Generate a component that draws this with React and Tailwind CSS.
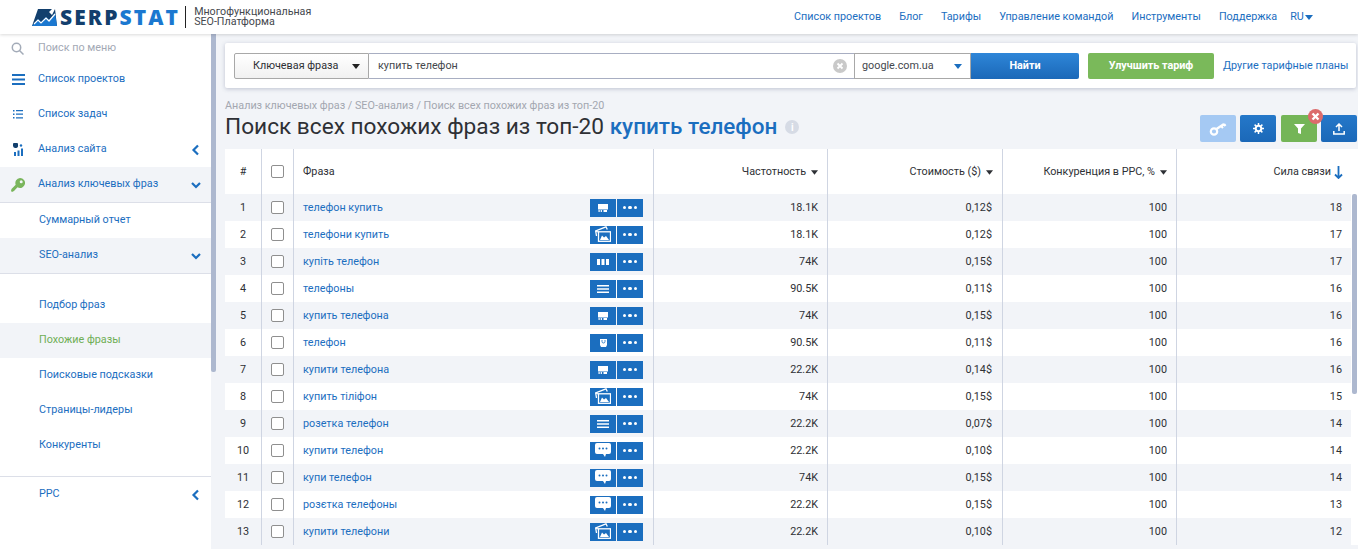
const font = { fontFamily: "Roboto, sans-serif" };

const rows = [
  [1, "телефон купить", "shop", "18.1K", "0,12$", 18],
  [2, "телефони купить", "images", "18.1K", "0,12$", 17],
  [3, "купіть телефон", "columns", "74K", "0,15$", 17],
  [4, "телефоны", "lines", "90.5K", "0,11$", 16],
  [5, "купить телефона", "shop", "74K", "0,15$", 16],
  [6, "телефон", "bag", "90.5K", "0,11$", 16],
  [7, "купити телефона", "shop", "22.2K", "0,14$", 16],
  [8, "купить тіліфон", "images", "74K", "0,15$", 15],
  [9, "розетка телефон", "lines", "22.2K", "0,07$", 14],
  [10, "купити телефон", "chat", "22.2K", "0,10$", 14],
  [11, "купи телефон", "chat", "74K", "0,15$", 14],
  [12, "розєтка телефоны", "chat", "22.2K", "0,15$", 13],
  [13, "купити телефони", "images", "22.2K", "0,10$", 12],
];

const topLinks = ["Список проектов", "Блог", "Тарифы", "Управление командой", "Инструменты", "Поддержка"];

function Caret({ className = "" }) {
  return (
    <svg width="8" height="5" viewBox="0 0 8 5" className={className}>
      <path d="M0 0h8L4 5z" fill="currentColor" />
    </svg>
  );
}

function Chevron({ dir }) {
  return (
    <svg width="12" height="12" viewBox="0 0 12 12" className="text-[#1b6ebf]">
      <path
        d={dir === "down" ? "M2 4l4 4 4-4" : "M8 1.500L3.500 6 8 10.500"}
        fill="none"
        stroke="currentColor"
        strokeWidth="2.200"
      />
    </svg>
  );
}

function RowIcon({ type }) {
  if (type === "shop")
    return (
      <svg width="10" height="8" viewBox="0 0 10 8" fill="white">
        <path d="M0 0h10v5.500H0z" />
        <path d="M.5 6h1.200v2H.5zM2.700 6h1.200v2H2.700zM5.500 6H9v2H5.500z" />
      </svg>
    );
  if (type === "images")
    return (
      <svg width="16" height="16" viewBox="0 0 16 16" fill="none" stroke="white" className="-mt-px">
        <path d="M1.500 10L.7 5 11 .8l1.300 2.700" strokeWidth="1.300" />
        <path d="M.7 5l3 1.200" strokeWidth="1.100" />
        <rect x="3.500" y="5.800" width="12" height="9.500" strokeWidth="1.300" />
        <path d="M5 14l2-4.500 2 2 2-1.500 3 4z" fill="white" stroke="none" />
      </svg>
    );
  if (type === "columns")
    return (
      <svg width="12" height="6" viewBox="0 0 12 6" fill="white">
        <path d="M0 0h3v6H0zM4.500 0h3v6h-3zM9 0h3v6H9z" />
      </svg>
    );
  if (type === "lines")
    return (
      <svg width="12" height="8" viewBox="0 0 12 8" fill="white">
        <path d="M0 0h12v1.500H0zM0 3.250h12v1.500H0zM0 6.500h12V8H0z" />
      </svg>
    );
  if (type === "bag")
    return (
      <svg width="7" height="8" viewBox="0 0 7 8" fill="white">
        <path d="M0 0h7v6L6 8H1L0 6z" />
        <path d="M2 1v1.500a1.500 1.500 0 003 0V1" fill="none" stroke="#1b6ebf" strokeWidth=".8" />
      </svg>
    );
  return (
    <svg width="16" height="14" viewBox="0 0 16 14" fill="white" className="-mt-px">
      <path d="M2 0h12a2 2 0 012 2v7a2 2 0 01-2 2h-3l-1 3-2-3H2a2 2 0 01-2-2V2a2 2 0 012-2z" />
      <circle cx="4.500" cy="5.500" r="1" fill="#1b6ebf" />
      <circle cx="8" cy="5.500" r="1" fill="#1b6ebf" />
      <circle cx="11.500" cy="5.500" r="1" fill="#1b6ebf" />
    </svg>
  );
}

function Check() {
  return <span className="h-[13px] w-[13px] rounded-[2px] border border-[#8f8f8f] bg-white" />;
}

function SideItem({ icon, label, chevron, active, sub }) {
  return (
    <div
      className={`flex h-[35px] items-center pr-[9px] text-[#1b6ebf] ${active ? "bg-[#f2f4f8]" : ""} ${sub ? "pl-[39px]" : ""}`}
    >
      {!sub && <span className="flex w-[38px] shrink-0 justify-center pr-[2px]">{icon}</span>}
      <span className="flex-1">{label}</span>
      {chevron && <Chevron dir={chevron} />}
    </div>
  );
}

function ActionButton({ color, children }) {
  return (
    <div className={`flex h-[27px] w-9 items-center justify-center rounded-[2px] ${color}`}>{children}</div>
  );
}

export default function App() {
  return (
    <div className="h-[549px] overflow-hidden bg-[#f2f4f8] text-[10.800px] text-[#2e3035]" style={font}>
      <header className="relative z-10 flex h-[34px] items-center bg-white shadow-[0_1px_3px_rgba(0,0,0,0.15)]">
        <div className="flex w-[794px] shrink-0 items-center pl-[32px]">
          <svg width="25" height="17" viewBox="0 0 25 17">
            <path d="M6 0h14l-3 3 3 3 3-6 2 17H0z" fill="#123f6d" />
            <path d="M0 17l6-7 3 3 5-5 3 3 6-7 2 13z" fill="#1b78d0" />
            <path d="M2 15l4-4 3 3 5-5 3 3 6-7" fill="none" stroke="white" strokeWidth="1.200" />
          </svg>
          <span
            className="ml-[3px] text-[21px] leading-none font-extrabold tracking-[2.100px] text-[#123f6d]"
            style={{ fontFamily: "'Open Sans', sans-serif" }}
          >
            SERP<span className="text-[#1b78d0]">STAT</span>
          </span>
          <span className="mr-[8px] ml-[5px] h-[22px] w-px bg-[#222]" />
          <span className="text-[10.700px] leading-[10px] text-[#44474d]">
            Многофункциональная
            <br />
            SEO-Платформа
          </span>
        </div>
        <nav className="flex items-center text-[#1b6ebf]">
          {topLinks.map((link) => (
            <span key={link} className="mr-[18px]">{link}</span>
          ))}
          <span className="-ml-[5px] flex items-center gap-[1px]">
            RU <Caret />
          </span>
        </nav>
      </header>

      <div className="flex h-[515px]">
        <aside className="relative flex w-[216px] shrink-0 bg-white">
          <div className="w-[211px] pt-px">
            <div className="flex h-[27px] items-center text-[#a3a9b5]">
              <span className="flex w-[35px] justify-center">
                <svg width="13" height="13" viewBox="0 0 13 13" fill="none" stroke="#a3abb8" strokeWidth="1.500">
                  <circle cx="5.500" cy="5.500" r="4.200" />
                  <path d="M8.500 8.500L12.500 12.500" />
                </svg>
              </span>
              <span className="ml-[3px]">Поиск по меню</span>
            </div>
            <SideItem
              label="Список проектов"
              icon={
                <svg width="13" height="11" viewBox="0 0 13 11" fill="#1b6ebf">
                  <path d="M0 0h13v2H0zM0 4.500h13v2H0zM0 9h13v2H0z" />
                </svg>
              }
            />
            <SideItem
              label="Список задач"
              icon={
                <svg width="10" height="9" viewBox="0 0 10 9" fill="#1b6ebf">
                  <path d="M0 0h1.500v1.500H0zM3 0h7v1.200H3zM0 3.500h1.500V5H0zM3 3.600h7v1.200H3zM0 7h1.500v1.500H0zM3 7.200h7v1.200H3z" />
                </svg>
              }
            />
            <SideItem
              label="Анализ сайта"
              chevron="left"
              icon={
                <svg width="11" height="13" viewBox="0 0 11 13" fill="#123f6d">
                  <path d="M1 0h3a1 1 0 011 1v1a2.500 2.500 0 01-5 1V1a1 1 0 011-1z" />
                  <circle cx="8" cy="2.500" r="1.200" fill="#1b6ebf" />
                  <path d="M1 9h2v4H1zM4.500 7.500h2V13h-2zM8 5.500h2V13H8z" fill="#1b6ebf" />
                </svg>
              }
            />
            <div className="border-b border-[#dcdfe8]">
              <SideItem
                active
                label="Анализ ключевых фраз"
                chevron="down"
                icon={
                  <svg width="14" height="14" viewBox="0 0 14 14" fill="#7ab55c">
                    <path d="M9 0a5 5 0 11-2.500 9.300L3 13l-2 1-1-1 .5-2 4.200-4.200A5 5 0 019 0zm1.200 2.300a1.500 1.500 0 100 3 1.500 1.500 0 000-3z" fillRule="evenodd" />
                  </svg>
                }
              />
            </div>
            <SideItem sub label="Суммарный отчет" />
            <div className="border-b border-[#dcdfe8]">
              <SideItem sub active label="SEO-анализ" chevron="down" />
            </div>
            <div className="mt-[14px]">
              <SideItem sub label="Подбор фраз" />
              <div className="flex h-[35px] items-center bg-[#f2f4f8] pl-[39px] text-[#6fae55]">Похожие фразы</div>
              <SideItem sub label="Поисковые подсказки" />
              <SideItem sub label="Страницы-лидеры" />
              <SideItem sub label="Конкуренты" />
            </div>
            <div className="mt-[13px] border-t border-[#dcdfe8]">
              <SideItem sub label="PPC" chevron="left" />
            </div>
          </div>
          <div className="h-full w-[5px] bg-[#f2f4f8]">
            <div className="h-[338px] rounded-b-[2px] bg-[#adb8cf]" />
          </div>
        </aside>

        <main className="min-w-0 flex-1 pl-[9px]">
          <div className="mt-[9px] mr-[2px] flex h-[45px] items-center rounded-[2px] bg-white pt-px pl-[9px] shadow-[0_1px_4px_rgba(70,80,120,0.3)]">
            <div className="flex h-[26px] w-[135px] shrink-0 items-center rounded-l-[2px] border border-[#a8a8a8] bg-gradient-to-b from-white to-[#f1f1f1] pr-[8px] pl-[18px] text-[#2e3035]">
              <span className="flex-1">Ключевая фраза</span>
              <Caret className="text-[#222]" />
            </div>
            <div className="flex h-[26px] w-[485px] shrink-0 items-center border-y border-[#a8aec2] bg-white pr-[7px] pl-[9px] text-[#44474d]">
              <span className="flex-1">купить телефон</span>
              <svg width="14" height="14" viewBox="0 0 14 14">
                <circle cx="7" cy="7" r="7" fill="#c9c9c9" />
                <path d="M4.500 4.500l5 5M9.500 4.500l-5 5" stroke="white" strokeWidth="1.800" />
              </svg>
            </div>
            <div className="flex h-[26px] w-[117px] shrink-0 items-center border border-[#a8a8a8] bg-white pr-[8px] pl-[7px] text-[#44474d]">
              <span className="flex-1">google.com.ua</span>
              <Caret className="text-[#1b6ebf]" />
            </div>
            <div className="flex h-[26px] w-[108px] shrink-0 items-center justify-center rounded-r-[2px] bg-gradient-to-b from-[#2e86d8] to-[#1b68b8] font-bold text-white">
              Найти
            </div>
            <div className="ml-[9px] flex h-[26px] w-[126px] shrink-0 items-center justify-center rounded-[2px] bg-[#7ab95a] font-bold text-white">
              Улучшить тариф
            </div>
            <span className="ml-[9px] whitespace-nowrap text-[#1b6ebf]">Другие тарифные планы</span>
          </div>

          <div className="mt-[11px] leading-[13px] text-[#a3a7b0]">
            Анализ ключевых фраз / SEO-анализ / Поиск всех похожих фраз из топ-20
          </div>

          <div className="flex h-[30px] items-center">
            <h1 className="text-[22.650px] leading-none whitespace-nowrap text-[#2e3035]">
              Поиск всех похожих фраз из топ-20 <span className="text-[22.500px] font-medium text-[#1b6ebf]">купить телефон</span>
            </h1>
            <span className="ml-[8px] flex h-[14px] w-[14px] items-center justify-center rounded-full bg-[#d6dbe5] text-[10px] font-bold text-white">
              i
            </span>
            <div className="mt-[3px] mr-[1px] ml-auto flex gap-1">
              <ActionButton color="bg-[#a5c9f3]">
                <svg width="18" height="14" viewBox="0 0 18 14" fill="none" stroke="white" strokeWidth="2.200">
                  <circle cx="5" cy="9.500" r="3.200" />
                  <path d="M7.500 7L15 2M12 4l2 2M15 2l1.500 2" />
                </svg>
              </ActionButton>
              <ActionButton color="bg-gradient-to-b from-[#2578c9] to-[#1b68b8]">
                <svg width="11" height="11" viewBox="0 0 11 11" fill="none" stroke="white">
                  <circle cx="5.500" cy="5.500" r="2.800" strokeWidth="2" />
                  <path d="M5.500 0v2M5.500 9v2M0 5.500h2M9 5.500h2M1.600 1.600L3 3M8 8l1.400 1.400M9.400 1.600L8 3M3 8L1.600 9.400" strokeWidth="1.500" />
                </svg>
              </ActionButton>
              <div className="relative ml-px">
                <ActionButton color="bg-[#74b557]">
                  <svg width="11" height="10" viewBox="0 0 11 10" fill="white">
                    <path d="M0 0h11L7 4.500V10L4 9V4.500z" />
                  </svg>
                </ActionButton>
                <svg width="15" height="15" viewBox="0 0 15 15" className="absolute -top-[6px] -right-[6px]">
                  <circle cx="7.500" cy="7.500" r="7.500" fill="#dc6b6b" />
                  <path d="M4.500 4.500l6 6M10.500 4.500l-6 6" stroke="white" strokeWidth="2.400" />
                </svg>
              </div>
              <ActionButton color="bg-gradient-to-b from-[#2578c9] to-[#1b68b8]">
                <svg width="12" height="12" viewBox="0 0 12 12" fill="none" stroke="white" strokeWidth="1.500">
                  <path d="M6 8V1.500M3 4l3-3 3 3" />
                  <path d="M.8 8v3h10.400V8" />
                </svg>
              </ActionButton>
            </div>
          </div>

          <div className="relative mt-[7px] bg-white">
            <div className="grid h-[45px] grid-cols-[37px_32px_360px_174px_175px_174px_1fr] items-stretch">
              <div className="flex items-center justify-center border-r border-[#cfd5e2] pt-[2px]">#</div>
              <div className="flex items-center justify-center border-r border-[#cfd5e2]"><Check /></div>
              <div className="flex items-center border-r border-[#cfd5e2] pt-[2px] pl-[9px]">Фраза</div>
              <div className="flex items-center justify-end gap-[5px] border-r border-[#cfd5e2] pt-[2px] pr-[9px]">Частотность <Caret className="w-[7px]" /></div>
              <div className="flex items-center justify-end gap-[5px] border-r border-[#cfd5e2] pt-[2px] pr-[9px]">Стоимость ($) <Caret className="w-[7px]" /></div>
              <div className="flex items-center justify-end gap-[5px] border-r border-[#cfd5e2] pt-[2px] pr-[9px]">Конкуренция в PPC, % <Caret className="w-[7px]" /></div>
              <div className="flex items-center justify-end gap-[3px] pt-[2px] pr-[15px]">
                Сила связи
                <svg width="9" height="13" viewBox="0 0 9 13" fill="none" stroke="#1b6ebf" strokeWidth="1.800">
                  <path d="M4.500 0v12M1 8.500l3.500 3.500L8 8.500" />
                </svg>
              </div>
            </div>
            <div className="pr-[7px]">
              {rows.map(([num, phrase, icon, freq, cost, strength]) => (
                <div
                  key={num}
                  className={`grid h-[27px] grid-cols-[37px_32px_360px_174px_175px_174px_1fr] items-stretch ${num % 2 ? "bg-[#f2f4f8]" : "bg-white"}`}
                >
                  <div className="flex items-center justify-center border-r border-[#cfd5e2] pt-[2px]">{num}</div>
                  <div className="flex items-center justify-center border-r border-[#cfd5e2]"><Check /></div>
                  <div className="flex items-center border-r border-[#cfd5e2] pr-[10px] pl-[9px]">
                    <span className="flex-1 pt-[2px] text-[#1b6ebf]">{phrase}</span>
                    <span className="flex h-[18px] w-[26px] items-center justify-center bg-[#1b6ebf]">
                      <RowIcon type={icon} />
                    </span>
                    <span className="ml-px flex h-[18px] w-[26px] items-center justify-center gap-[2px] bg-[#1b6ebf]">
                      <i className="h-[3.500px] w-[3.500px] rounded-full bg-white" />
                      <i className="h-[3.500px] w-[3.500px] rounded-full bg-white" />
                      <i className="h-[3.500px] w-[3.500px] rounded-full bg-white" />
                    </span>
                  </div>
                  <div className="flex items-center justify-end border-r border-[#cfd5e2] pt-[2px] pr-[9px]">{freq}</div>
                  <div className="flex items-center justify-end border-r border-[#cfd5e2] pt-[2px] pr-[10px]">{cost}</div>
                  <div className="flex items-center justify-end border-r border-[#cfd5e2] pt-[2px] pr-[9px]">100</div>
                  <div className="flex items-center justify-end pt-[2px] pr-[9px]">{strength}</div>
                </div>
              ))}
            </div>
            <div className="absolute top-[45px] right-px h-[200px] w-[5px] rounded-[2px] bg-[#adb8cf]" />
          </div>
        </main>
      </div>
    </div>
  );
}
